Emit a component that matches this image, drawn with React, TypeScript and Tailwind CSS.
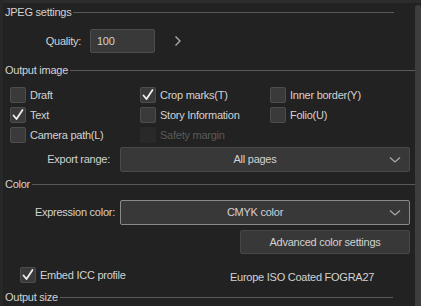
import React from "react";

const font = { fontFamily: '"Liberation Sans", Arial, sans-serif' };

function Header({ title, lineEnd }: { title: string; lineEnd: number }) {
  return (
    <div className="flex h-[18px] items-center pl-[5px]" style={{ paddingRight: 421 - lineEnd }}>
      <span className="text-[#d2d2d2] leading-none whitespace-nowrap">{title}</span>
      <div className="ml-[2px] h-px flex-1 bg-[#5a5a5a]" />
    </div>
  );
}

function Check({ checked, disabled }: { checked?: boolean; disabled?: boolean }) {
  return (
    <div
      className={
        disabled
          ? "h-[16px] w-[16px] shrink-0 rounded-[2px] bg-[#292929]"
          : "flex h-[16px] w-[16px] shrink-0 items-center justify-center rounded-[2px] border border-[#4d4d4d] bg-[#3a3a3a]"
      }
    >
      {checked && (
        <svg width="14" height="14" viewBox="0 0 14 14">
          <path d="M2.5 7.5 L5.5 11 L11.5 2" fill="none" stroke="#f0f0f0" strokeWidth="1.8" strokeLinecap="round" strokeLinejoin="round" />
        </svg>
      )}
    </div>
  );
}

function CheckItem({ label, checked, disabled }: { label: string; checked?: boolean; disabled?: boolean }) {
  return (
    <div className="flex h-[20px] items-center">
      <Check checked={checked} disabled={disabled} />
      <span className={"ml-[4px] whitespace-nowrap " + (disabled ? "text-[#5a5a5a]" : "text-[#d2d2d2]")}>{label}</span>
    </div>
  );
}

function Chevron() {
  return (
    <svg width="12" height="8" viewBox="0 0 12 8">
      <path d="M1 1.5 L6 6 L11 1.5" fill="none" stroke="#a8a8a8" strokeWidth="1.3" />
    </svg>
  );
}

function Select({ value, focused }: { value: string; focused?: boolean }) {
  return (
    <div
      className={
        "flex h-[25px] w-[290px] items-center rounded-[2px] border bg-[#383838] " +
        (focused ? "border-[#8a8a8a]" : "border-[#4a4a4a]")
      }
    >
      <span className="flex-1 text-center text-[#d2d2d2]">{value}</span>
      <div className="flex w-[20px] justify-start">
        <Chevron />
      </div>
    </div>
  );
}

export default function App() {
  return (
    <div
      className="relative h-[306px] w-[421px] overflow-hidden bg-[#222222] text-[11px] tracking-[-0.25px]"
      style={font}
    >
      <div className="h-[3px] bg-[#2c2c2c]" />
      <div className="absolute left-0 top-0 h-full w-[3px] bg-[#282828]" />
      <div className="absolute right-0 top-[5px] bottom-0 w-[6px] rounded-t-[3px] bg-[#3e3e3e]" />

      <Header title="JPEG settings" lineEnd={394} />

      <div className="mt-[8px] flex h-[24px] items-center">
        <div className="w-[81px] text-right text-[#d2d2d2]">Quality:</div>
        <div className="ml-[9px] flex h-[24px] w-[65px] items-center rounded-[2px] border border-[#4c4c4c] bg-[#393939] pl-[6px] text-[#d2d2d2]">
          100
        </div>
        <svg className="ml-[19px]" width="8" height="12" viewBox="0 0 8 12">
          <path d="M1.5 1.5 L6 6 L1.5 10.5" fill="none" stroke="#b0b0b0" strokeWidth="1.3" />
        </svg>
      </div>

      <div className="mt-[8px]">
        <Header title="Output image" lineEnd={415} />
      </div>

      <div className="mt-[6px] grid grid-cols-[130px_130px_1fr] pl-[10px]">
        <CheckItem label="Draft" />
        <CheckItem label="Crop marks(T)" checked />
        <CheckItem label="Inner border(Y)" />
        <CheckItem label="Text" checked />
        <CheckItem label="Story Information" />
        <CheckItem label="Folio(U)" />
        <CheckItem label="Camera path(L)" />
        <CheckItem label="Safety margin" disabled />
      </div>

      <div className="mt-[2px] flex items-center">
        <div className="w-[120px] pr-[10px] text-right text-[#d2d2d2]">Export range:</div>
        <Select value="All pages" />
      </div>

      <div className="mt-[3px]">
        <Header title="Color" lineEnd={415} />
      </div>

      <div className="mt-[7px] flex items-center">
        <div className="w-[120px] pr-[5px] text-right text-[#d2d2d2]">Expression color:</div>
        <Select value="CMYK color" focused />
      </div>

      <div className="mt-[5px] flex pl-[240px]">
        <div className="flex h-[24px] w-[170px] items-center justify-center rounded-[2px] border border-[#474747] bg-[#383838] text-[#d2d2d2]">
          Advanced color settings
        </div>
      </div>

      <div className="mt-[13px] flex h-[16px] items-center pl-[20px]">
        <Check checked />
        <span className="ml-[4px] w-[190px] text-[#d2d2d2]">Embed ICC profile</span>
        <span className="mt-[4px] text-[#d2d2d2]">Europe ISO Coated FOGRA27</span>
      </div>

      <div className="mt-[5px]">
        <Header title="Output size" lineEnd={393} />
      </div>
    </div>
  );
}
